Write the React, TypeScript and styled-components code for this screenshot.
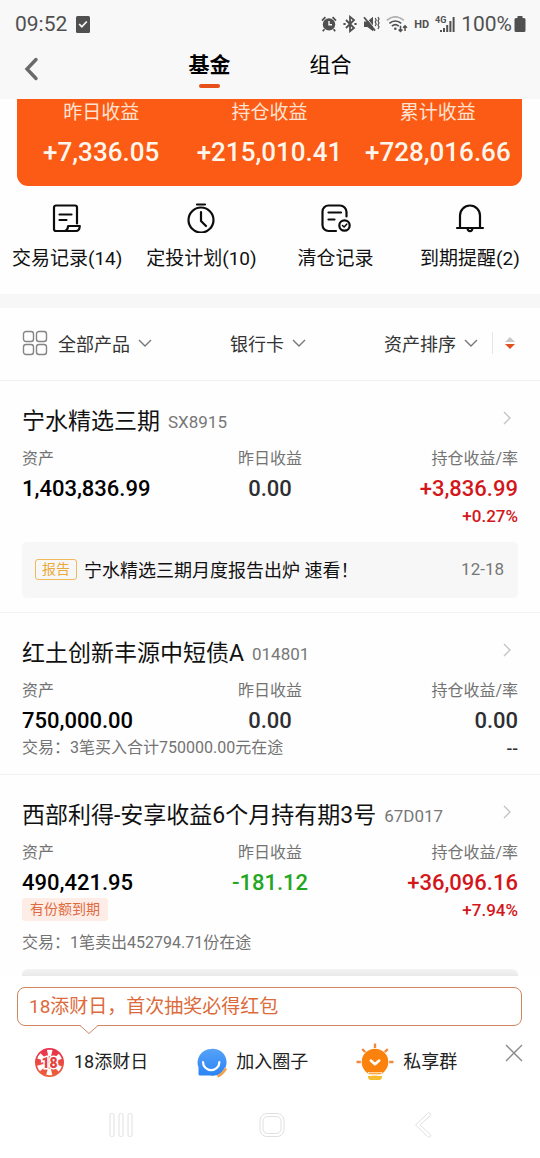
import React from 'react';
import styled, { createGlobalStyle } from 'styled-components';

const GlobalStyle = createGlobalStyle`
  * { box-sizing: border-box; }
  body {
    margin: 0;
    background: #fefefe;
    color: #111;
    font-family: Roboto, "Noto Sans CJK SC", sans-serif;
    font-size: 16px;
  }
  h2, dl, dd, dt, p { margin: 0; font-weight: 400; }
  button { border: 0; padding: 0; background: none; font: inherit; color: inherit; cursor: pointer; }
  a { color: inherit; text-decoration: none; }
  svg { display: block; flex: none; }
`;

const Screen = styled.div`
  display: flex;
  flex-direction: column;
  height: 100vh;
  overflow: hidden;
`;

const TopArea = styled.header`
  flex: none;
  background: #f8f8f8;
`;

const StatusBar = styled.div`
  display: flex;
  align-items: center;
  justify-content: space-between;
  height: 48px;
  padding: 0 14px 0 15px;
  font-size: 21px;
  color: #505050;
`;

const StatusGroup = styled.div<{ $gap: number }>`
  display: flex;
  align-items: center;
  gap: ${({ $gap }) => $gap}px;
`;

const HdMark = styled.span`
  font-size: 11px;
  font-weight: 700;
`;

const BatteryLevel = styled.span`
  display: flex;
  align-items: center;
  gap: 2px;
`;

const NavBar = styled.nav`
  display: grid;
  grid-template-columns: 1fr auto 1fr;
  height: 51px;
  padding: 0 22px;
`;

const BackButton = styled.button`
  justify-self: start;
  align-self: start;
  padding-top: 8px;
`;

const Tabs = styled.div`
  display: flex;
  gap: 79px;
`;

const Tab = styled.button<{ $active?: boolean }>`
  display: flex;
  flex-direction: column;
  align-items: center;
  gap: 2px;
  height: 41px;
  font-size: 21px;
  line-height: 34px;
  font-weight: ${({ $active }) => ($active ? 700 : 400)};
  color: #000;

  &::after {
    content: "";
    width: 21px;
    height: 4px;
    border-radius: 2px;
    background: ${({ $active }) => ($active ? '#e8501a' : 'transparent')};
  }
`;

const Content = styled.main`
  flex: 1;
  min-height: 0;
  overflow: hidden;
`;

const SummaryCard = styled.dl`
  display: grid;
  grid-template-columns: repeat(3, 1fr);
  margin: 0 18px 0 17px;
  padding-bottom: 16px;
  border-radius: 0 0 11px 11px;
  background: #fb5b14;
  text-align: center;
`;

const SummaryLabel = styled.dt`
  font-size: 19px;
  line-height: 28px;
  color: #ffe3d2;
`;

const SummaryValue = styled.dd`
  padding-top: 7px;
  font-size: 26px;
  line-height: 36px;
  font-weight: 500;
  color: #fff6ee;
`;

const Shortcuts = styled.nav`
  display: grid;
  grid-template-columns: repeat(4, 1fr);
  padding: 17px 3px 22px 0;
`;

const Shortcut = styled.a`
  display: flex;
  flex-direction: column;
  align-items: center;
  gap: 13px;
  font-size: 19px;
  line-height: 26px;
  white-space: nowrap;
`;

const Filters = styled.div`
  display: flex;
  align-items: center;
  justify-content: space-between;
  height: 87px;
  padding: 0 25px 2px 22px;
  border-top: 14px solid #f7f7f7;
  border-bottom: 1px solid #f0f0f0;
  font-size: 18px;
  color: #333;
`;

const FilterButton = styled.button`
  display: flex;
  align-items: center;
  gap: 8px;
`;

const FilterIcon = styled.span`
  padding-right: 2px;
`;

const SortGroup = styled.div`
  display: flex;
  align-items: center;
`;

const SortButton = styled.button`
  margin-left: 14px;
  padding: 5px 0 5px 12px;
  border-left: 1px solid #e6e6e6;
`;

const Holding = styled.article`
  padding: 25px 22px 14px;

  & + & { border-top: 1px solid #f2f2f2; }
`;

const HoldingTitle = styled.a`
  display: flex;
  align-items: center;
  gap: 8px;
  height: 32px;
  padding-right: 7px;

  svg { margin: 0 0 8px auto; }
`;

const FundName = styled.h2`
  font-size: 23px;
  line-height: 32px;
  white-space: nowrap;
`;

const FundCode = styled.span`
  font-size: 17px;
  color: #777;
`;

const Figures = styled.div`
  display: grid;
  grid-template-columns: 1fr auto 1fr;
  padding-top: 9px;
`;

const Figure = styled.dl<{ $align: 'left' | 'center' | 'right' }>`
  text-align: ${({ $align }) => $align};
`;

const FigureLabel = styled.dt`
  padding-bottom: 2px;
  line-height: 24px;
  color: #737373;
`;

const tones = { black: '#000', dark: '#2e2f33', red: '#d3161a', green: '#22a722' };
type Tone = keyof typeof tones;

const FigureValue = styled.dd<{ $tone: Tone }>`
  font-size: 22px;
  line-height: 31px;
  font-weight: 500;
  color: ${({ $tone }) => tones[$tone]};
`;

const FigureRate = styled.dd<{ $tone: Tone }>`
  font-size: 17px;
  line-height: 24px;
  font-weight: 500;
  color: ${({ $tone }) => tones[$tone]};
`;

const FigureTag = styled.dd`
  width: fit-content;
  padding: 0 8px;
  border-radius: 3px;
  background: #feece6;
  font-size: 14px;
  line-height: 23px;
  color: #e06a40;
`;

const TradeNote = styled.p<{ $gap?: number }>`
  padding-top: ${({ $gap = 0 }) => $gap}px;
  line-height: 24px;
  color: #737373;
  white-space: nowrap;
`;

const FigureNote = styled.dd`
  line-height: 24px;
  color: #737373;
  width: 0;
  white-space: nowrap;
`;

const Report = styled.a`
  display: flex;
  align-items: center;
  gap: 7px;
  height: 56px;
  margin-top: 14px;
  padding: 0 14px 2px 13px;
  border-radius: 5px;
  background: #f7f7f7;
  font-size: 18px;
`;

const ReportBadge = styled.span`
  padding: 0 6px;
  border: 1px solid #f0b95a;
  border-radius: 3px;
  font-size: 14px;
  line-height: 19px;
  color: #eba93c;
`;

const ReportDate = styled.time`
  margin-left: auto;
  font-size: 17px;
  color: #777;
`;

const NextPanel = styled.div`
  height: 56px;
  margin-top: 14px;
  border-radius: 6px;
  background: linear-gradient(#f3f3f3, #e9e9e9 7px);
`;

const Footer = styled.footer`
  flex: none;
  padding-top: 11px;
  background: #fff;
`;

const Promo = styled.a`
  position: relative;
  display: block;
  margin: 0 18px 0 17px;
  padding: 0 11px;
  border: 1px solid #cf8560;
  border-radius: 8px;
  font-size: 19px;
  line-height: 37px;
  color: #dc6b3c;
`;

const PromoPointer = styled.svg`
  position: absolute;
  left: 61px;
  top: 36px;
`;

const Channels = styled.div`
  display: flex;
  align-items: center;
  gap: 48px;
  height: 42px;
  margin: 15px 18px 9px 34px;
`;

const Channel = styled.a`
  display: flex;
  align-items: center;
  gap: 9px;
  font-size: 18px;
  line-height: 40px;
  color: #222;
  white-space: nowrap;
`;

const CloseButton = styled.button`
  align-self: flex-start;
  margin-left: auto;
  padding-top: 3px;
`;

const SystemNav = styled.div`
  display: flex;
  align-items: center;
  justify-content: center;
  gap: 123px;
  height: 66px;
  padding-left: 4px;
`;

const AlarmIcon = () => (
  <svg width="16" height="16" viewBox="0 0 16 16" fill="#505050">
    <circle cx="8" cy="8.4" r="6.2" />
    <path d="M1 4.6 4.4 1.2M15 4.6 11.6 1.2M3.4 13.2 1.8 15.2M12.6 13.2l1.6 2" stroke="#505050" strokeWidth="1.8" />
    <path d="M8 5v3.8h3" fill="none" stroke="#f8f8f8" strokeWidth="1.4" />
  </svg>
);

const BluetoothIcon = () => (
  <svg width="14" height="18" viewBox="0 0 14 18" fill="none" stroke="#505050" strokeWidth="1.8">
    <path d="M3 5l8 8-4 3.2V1.8L11 5l-8 8" />
    <path d="M.4 9h2.2M11.4 9h2.2" strokeWidth="2" />
  </svg>
);

const MuteIcon = () => (
  <svg width="17" height="16" viewBox="0 0 17 16" fill="#505050">
    <path d="M1 5.500h3.400L10 .8v14.400L4.400 11H1z" />
    <path d="M2 .4 12.600 13" stroke="#f8f8f8" strokeWidth="1" />
    <path d="M1 1.200l11 13.400" stroke="#505050" strokeWidth="1.800" />
    <path d="M12.200 2l1 2-1 2 1 2-1 2M15 1l1 2-1 2 1 2-1 2 1 2-1 2" fill="none" stroke="#505050" strokeWidth="1.200" />
  </svg>
);

const WifiIcon = () => (
  <svg width="22" height="17" viewBox="0 0 22 17" fill="none" stroke="#505050" strokeWidth="1.7">
    <path d="M.8 4.4C5.8-.4 12.8-.4 17.8 4.4" stroke="#b0b0b0" />
    <path d="M3.4 7.4c3.4-3.2 8.4-3.2 11.8 0M5.9 10.2c2-1.9 4.8-1.9 6.8 0" />
    <circle cx="9.3" cy="12.8" r="1.3" fill="#505050" stroke="none" />
    <path d="M14.5 9.8v5.6M12.6 13.5l1.9 2 1.9-2M19 15v-5M17.1 11.8l1.9-2 1.9 2" strokeWidth="1.5" />
  </svg>
);

const SignalIcon = () => (
  <svg width="20" height="18" viewBox="0 0 20 18" fill="#505050">
    <text x="0" y="8" fontSize="9" fontWeight="700" fontFamily="Roboto, sans-serif">4G</text>
    <path d="M5 15h2v2H5zM8 13h2v4H8zM11.2 10h2v7h-2zM14.4 6h2v11h-2zM17.6 2h2v15h-2z" />
  </svg>
);

const BatteryIcon = () => (
  <svg width="12" height="17" viewBox="0 0 12 17" fill="#505050">
    <path d="M3.5 0h5v2H10a1.5 1.5 0 0 1 1.5 1.5v11A1.5 1.5 0 0 1 10 16H2a1.5 1.5 0 0 1-1.5-1.5v-11A1.5 1.5 0 0 1 2 2h1.5z" />
  </svg>
);

const ChevronDown = () => (
  <svg width="14" height="8" viewBox="0 0 14 8" fill="none" stroke="#777" strokeWidth="1.4">
    <path d="M1 1l6 6 6-6" />
  </svg>
);

const ChevronRight = () => (
  <svg width="8" height="14" viewBox="0 0 8 14" fill="none" stroke="#c4c4c4" strokeWidth="1.4">
    <path d="M1 1l6 6-6 6" />
  </svg>
);

const lineIcon = {
  width: 30,
  height: 30,
  viewBox: '0 0 30 30',
  fill: 'none',
  stroke: '#0c0c0c',
  strokeWidth: 2.2,
  strokeLinecap: 'round' as const,
  strokeLinejoin: 'round' as const,
};

const RecordsIcon = () => (
  <svg {...lineIcon}>
    <path d="M25 20.500V4.500a2 2 0 0 0-2-2H4a2 2 0 0 0-2 2V26a2 2 0 0 0 2 2h20c2.500 0 3.600-2 3.800-5H16.200c-.4 2.500-1.200 5-3.700 5" />
    <path d="M7.500 11.500h12M7.500 17h7" />
  </svg>
);

const PlanIcon = () => (
  <svg {...lineIcon}>
    <circle cx="15" cy="17" r="12.500" />
    <path d="M11 1.500h8M15 9v9l5 5" />
  </svg>
);

const ClearedIcon = () => (
  <svg {...lineIcon}>
    <path d="M25.500 13.500V9a6.500 6.500 0 0 0-6.500-6.500H7.500A6 6 0 0 0 1.500 8.500V22a6 6 0 0 0 6 6H15M7.500 9.500h12.500M7.500 16.500h6" />
    <circle cx="23.500" cy="22.500" r="5.200" />
    <path d="M21.500 22.500l1.600 1.500 2.600-2.800" strokeWidth="1.600" />
  </svg>
);

const BellIcon = () => (
  <svg {...lineIcon}>
    <path d="M2 25h26M5 25V12.500a10 10 0 0 1 20 0V25M12.500 25.500c.4 3.600 4.600 3.600 5 0" />
  </svg>
);

const GridIcon = () => (
  <svg width="26" height="26" viewBox="0 0 26 26" fill="none" stroke="#858585" strokeWidth="1.4">
    <rect x="1.5" y="1.5" width="10" height="10" rx="2.5" />
    <rect x="14.5" y="1.5" width="10" height="10" rx="2.5" />
    <rect x="1.5" y="14.5" width="10" height="10" rx="2.5" />
    <rect x="14.5" y="14.5" width="10" height="10" rx="2.5" />
  </svg>
);

const SortIcon = () => (
  <svg width="10" height="12" viewBox="0 0 10 12">
    <path d="M0 5 5 0l5 5z" fill="#c8c8c8" />
    <path d="M0 7h10l-5 5z" fill="#e2501e" />
  </svg>
);

const LotteryIcon = () => (
  <svg width="31" height="31" viewBox="0 0 31 31">
    <defs>
      <linearGradient id="chip" x1="0" y1="0" x2="0" y2="1">
        <stop offset="0" stopColor="#e8304c" />
        <stop offset="1" stopColor="#ee6238" />
      </linearGradient>
    </defs>
    <circle cx="15.5" cy="15.5" r="14.5" fill="url(#chip)" />
    <circle cx="15.5" cy="15.5" r="9.5" fill="none" stroke="#fff" strokeWidth="6.6" strokeDasharray="4.6 5.348" strokeDashoffset="2.3" transform="rotate(-90 15.5 15.5)" />
    <text x="15.500" y="20.500" textAnchor="middle" fontSize="14" fontWeight="900" fontFamily="Roboto, sans-serif" fill="#e5403f" stroke="#fff" strokeWidth="3" paintOrder="stroke">18</text>
  </svg>
);

const CircleIcon = () => (
  <svg width="31" height="31" viewBox="0 0 31 31">
    <defs>
      <linearGradient id="bubble" x1="0" y1="0" x2="0" y2="1">
        <stop offset="0" stopColor="#55a2f7" />
        <stop offset="1" stopColor="#2b83f6" />
      </linearGradient>
    </defs>
    <path d="M14.5 2a13.5 13.5 0 1 1 0 26.500H4a1.500 1.500 0 0 1-1.500-1.500v-6.500A13.500 13.500 0 0 1 14.500 2z" fill="url(#bubble)" />
    <path d="M21.5 30.5c4.500-1.500 7.500-4.500 9-9" fill="none" stroke="#fff" strokeWidth="4" />
    <path d="M21.5 29.5c3.500-1.500 6.500-4.500 8.500-8" fill="none" stroke="#f0a04a" strokeWidth="2.6" />
    <path d="M7 15a8.200 8.200 0 0 0 16.400 0" fill="none" stroke="#fff" strokeWidth="2.2" strokeLinecap="round" />
  </svg>
);

const BulbIcon = () => (
  <svg width="38" height="38" viewBox="0 0 38 38">
    <path d="M19 .5v4.500M6.200 6l3 3M31.800 6l-3 3M.5 19H4.800M33.200 19h4.300" stroke="#f08a3c" strokeWidth="2.4" />
    <circle cx="19" cy="19" r="13.3" fill="#fb820c" />
    <path d="M12 29h14v3H12z" fill="#fff" />
    <path d="M12.5 29.5h13v1.800h-13z" fill="#f8a83c" />
    <path d="M12 33h14v1.500a3 3 0 0 1-3 2.500h-8a3 3 0 0 1-3-2.500z" fill="#f5bd2d" />
    <path d="M14.8 17.6l4.200 3.600 4.200-3.600" fill="none" stroke="#fff" strokeWidth="2.6" strokeLinecap="round" strokeLinejoin="round" />
  </svg>
);

const CloseIcon = () => (
  <svg width="18" height="18" viewBox="0 0 18 18" stroke="#8a8a8a" strokeWidth="1.4">
    <path d="M1 1l16 16M17 1 1 17" />
  </svg>
);

const RecentIcon = () => (
  <svg width="28" height="28" viewBox="0 0 28 28" fill="none" stroke="#e0e0e0">
    <rect x="3" y="2.5" width="4" height="23" rx="1.5" />
    <rect x="12" y="2.5" width="4" height="23" rx="1.5" />
    <rect x="21" y="2.5" width="4" height="23" rx="1.5" />
  </svg>
);

const HomeIcon = () => (
  <svg width="28" height="28" viewBox="0 0 28 28" fill="none" stroke="#e0e0e0">
    <rect x="2" y="2.5" width="24" height="23" rx="7" />
    <rect x="5" y="5.5" width="18" height="17" rx="4.5" />
  </svg>
);

const SystemBackIcon = () => (
  <svg width="28" height="28" viewBox="0 0 28 28" fill="none" stroke="#e0e0e0" strokeLinejoin="round">
    <path d="M18.5 2.5 6.5 14l12 11.500a1.700 1.700 0 0 0 2.800-2L11 14l10.300-9.500a1.700 1.700 0 0 0-2.800-2z" />
  </svg>
);

const summary = [
  ['昨日收益', '+7,336.05'],
  ['持仓收益', '+215,010.41'],
  ['累计收益', '+728,016.66'],
];

const shortcuts = [
  { label: '交易记录(14)', icon: <RecordsIcon /> },
  { label: '定投计划(10)', icon: <PlanIcon /> },
  { label: '清仓记录', icon: <ClearedIcon /> },
  { label: '到期提醒(2)', icon: <BellIcon /> },
];

type HoldingCardProps = {
  name: string;
  code: string;
  asset: string;
  daily: string;
  dailyTone?: Tone;
  total: string;
  totalTone?: Tone;
  rate: string;
  tag?: string;
  inlineNote?: string;
  children?: React.ReactNode;
};

const HoldingCard = ({
  name, code, asset, daily, dailyTone = 'dark', total, totalTone = 'red', rate, tag, inlineNote, children,
}: HoldingCardProps) => (
  <Holding>
    <HoldingTitle href="#">
      <FundName>{name}</FundName>
      <FundCode>{code}</FundCode>
      <ChevronRight />
    </HoldingTitle>
    <Figures>
      <Figure $align="left">
        <FigureLabel>资产</FigureLabel>
        <FigureValue $tone="black">{asset}</FigureValue>
        {tag && <FigureTag>{tag}</FigureTag>}
        {inlineNote && <FigureNote>{inlineNote}</FigureNote>}
      </Figure>
      <Figure $align="center">
        <FigureLabel>昨日收益</FigureLabel>
        <FigureValue $tone={dailyTone}>{daily}</FigureValue>
      </Figure>
      <Figure $align="right">
        <FigureLabel>持仓收益/率</FigureLabel>
        <FigureValue $tone={totalTone}>{total}</FigureValue>
        <FigureRate $tone={totalTone}>{rate}</FigureRate>
      </Figure>
    </Figures>
    {children}
  </Holding>
);

export default function App() {
  return (
    <Screen>
      <GlobalStyle />
      <TopArea>
        <StatusBar>
          <StatusGroup $gap={9}>
            <span>09:52</span>
            <svg width="14" height="17" viewBox="0 0 14 17">
              <rect x="0" y="0" width="14" height="17" rx="1.5" fill="#505050" />
              <path d="M3.2 8l2.600 2.800L10.800 5.500" fill="none" stroke="#f8f8f8" strokeWidth="1.8" />
            </svg>
          </StatusGroup>
          <StatusGroup $gap={6}>
            <AlarmIcon />
            <BluetoothIcon />
            <MuteIcon />
            <WifiIcon />
            <HdMark>HD</HdMark>
            <SignalIcon />
            <BatteryLevel>100%<BatteryIcon /></BatteryLevel>
          </StatusGroup>
        </StatusBar>
        <NavBar>
          <BackButton aria-label="返回">
            <svg width="18" height="26" viewBox="0 0 18 26" fill="none" stroke="#6a6a6a" strokeWidth="3.4" strokeLinecap="round">
              <path d="M14 3.5 5 13l9 9.500" />
            </svg>
          </BackButton>
          <Tabs>
            <Tab $active>基金</Tab>
            <Tab>组合</Tab>
          </Tabs>
        </NavBar>
      </TopArea>

      <Content>
        <SummaryCard>
          {summary.map(([label, value]) => (
            <div key={label}>
              <SummaryLabel>{label}</SummaryLabel>
              <SummaryValue>{value}</SummaryValue>
            </div>
          ))}
        </SummaryCard>

        <Shortcuts>
          {shortcuts.map(({ label, icon }) => (
            <Shortcut href="#" key={label}>{icon}{label}</Shortcut>
          ))}
        </Shortcuts>

        <Filters>
          <FilterButton>
            <FilterIcon><GridIcon /></FilterIcon>
            全部产品
            <ChevronDown />
          </FilterButton>
          <FilterButton>银行卡<ChevronDown /></FilterButton>
          <SortGroup>
            <FilterButton>资产排序<ChevronDown /></FilterButton>
            <SortButton aria-label="降序"><SortIcon /></SortButton>
          </SortGroup>
        </Filters>

        <HoldingCard name="宁水精选三期" code="SX8915" asset="1,403,836.99" daily="0.00" total="+3,836.99" rate="+0.27%">
          <Report href="#">
            <ReportBadge>报告</ReportBadge>
            宁水精选三期月度报告出炉 速看！
            <ReportDate>12-18</ReportDate>
          </Report>
        </HoldingCard>

        <HoldingCard
          name="红土创新丰源中短债A"
          code="014801"
          asset="750,000.00"
          daily="0.00"
          total="0.00"
          totalTone="dark"
          rate="--"
          inlineNote="交易：3笔买入合计750000.00元在途"
        />

        <HoldingCard
          name="西部利得-安享收益6个月持有期3号"
          code="67D017"
          asset="490,421.95"
          daily="-181.12"
          dailyTone="green"
          total="+36,096.16"
          rate="+7.94%"
          tag="有份额到期"
        >
          <TradeNote $gap={9}>交易：1笔卖出452794.71份在途</TradeNote>
          <NextPanel />
        </HoldingCard>
      </Content>

      <Footer>
        <Promo href="#">
          18添财日，首次抽奖必得红包
          <PromoPointer width="20" height="10" viewBox="0 0 20 10">
            <path d="M1 0h18v1l-9 8-9-8z" fill="#fff" />
            <path d="M1 1.5 10 9.500l9-8" fill="none" stroke="#cf8560" />
          </PromoPointer>
        </Promo>
        <Channels>
          <Channel href="#"><LotteryIcon />18添财日</Channel>
          <Channel href="#"><CircleIcon />加入圈子</Channel>
          <Channel href="#"><BulbIcon />私享群</Channel>
          <CloseButton aria-label="关闭"><CloseIcon /></CloseButton>
        </Channels>
        <SystemNav>
          <button aria-label="最近任务"><RecentIcon /></button>
          <button aria-label="主屏幕"><HomeIcon /></button>
          <button aria-label="系统返回"><SystemBackIcon /></button>
        </SystemNav>
      </Footer>
    </Screen>
  );
}
